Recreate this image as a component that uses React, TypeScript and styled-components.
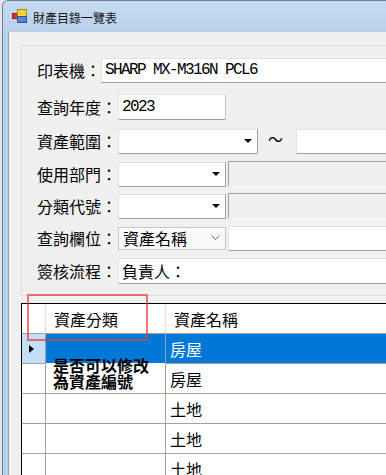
import styled, { createGlobalStyle } from 'styled-components';

const GlobalStyle = createGlobalStyle`
  html, body {
    margin: 0;
    padding: 0;
  }
  body {
    width: 386px;
    height: 475px;
    overflow: hidden;
    background: #e6e6e6;
    font-family: "Noto Sans CJK TC", "Noto Sans", sans-serif;
  }
`

const Window = styled.div`
  display: flex;
  flex-direction: column;
  width: 420px;
  height: 475px;
  margin-left: 2px;
  background: #bfd5ec;
  border-top: 1px solid #6d8096;
  border-left: 1px solid #6d8096;
  border-top-left-radius: 6px;
  box-sizing: border-box;
  overflow: hidden;
`

const TitleBar = styled.div`
  flex-shrink: 0;
  display: flex;
  align-items: center;
  gap: 5px;
  height: 31px;
  padding-left: 9px;
  background: linear-gradient(#c6dbf0, #b9d1ea);
`

const Title = styled.span`
  font-size: 12px;
  line-height: 14px;
  color: #111;
  padding-top: 2px;
`

const Frame = styled.div`
  flex: 1;
  min-height: 0;
  display: flex;
  padding-left: 5px;
  background: #b9d1ea;
`

const Client = styled.div`
  position: relative;
  flex: 1;
  background: #f0f0f0;
  border-left: 1px solid #8ea4bd;
  padding: 13px 0 0 12px;
`

const GroupBox = styled.div`
  width: 420px;
  border: 1px solid #dcdcdc;
  padding: 11px 0 11px 15px;
`

const Row = styled.div<{ $mt: number }>`
  display: flex;
  align-items: center;
  height: 26px;
  margin-top: ${p => p.$mt}px;
`

const Label = styled.span<{ $w: number }>`
  flex-shrink: 0;
  width: ${p => p.$w}px;
  font-size: 16px;
  line-height: 20px;
  color: #000;
  white-space: nowrap;
`

const TextBox = styled.div<{ $w: number; $disabled?: boolean; $h?: number; $ml?: number }>`
  flex-shrink: 0;
  display: flex;
  align-items: center;
  box-sizing: border-box;
  width: ${p => p.$w}px;
  height: ${p => p.$h ?? 25}px;
  margin-left: ${p => p.$ml ?? 0}px;
  padding-left: 3px;
  background: ${p => (p.$disabled ? '#f0f0f0' : '#fff')};
  border: 1px solid;
  border-color: ${p =>
    p.$disabled ? '#a0a0a0 #fff #fff #a0a0a0' : '#e3e3e3 #c4c4c4 #a0a0a0 #e3e3e3'};
`

const MonoText = styled.span`
  font-family: "Liberation Mono", monospace;
  font-size: 16px;
  letter-spacing: -1.6px;
  color: #000;
  line-height: 20px;
`

const BoxText = styled.span`
  font-size: 16px;
  line-height: 20px;
  color: #000;
`

const Combo = styled.div<{ $w: number }>`
  flex-shrink: 0;
  display: flex;
  align-items: center;
  justify-content: flex-end;
  box-sizing: border-box;
  width: ${p => p.$w}px;
  height: 25px;
  padding-right: 5px;
  background: #fff;
  border: 1px solid;
  border-color: #e3e3e3 #a0a0a0 #a0a0a0 #e3e3e3;
`

const Arrow = styled.span`
  width: 0;
  height: 0;
  border-left: 4px solid transparent;
  border-right: 4px solid transparent;
  border-top: 4px solid #000;
`

const FlatCombo = styled.div<{ $w: number }>`
  flex-shrink: 0;
  display: flex;
  align-items: center;
  justify-content: space-between;
  box-sizing: border-box;
  width: ${p => p.$w}px;
  height: 23px;
  padding: 0 5px 0 4px;
  background: #fbfbfb;
  border: 1px solid #c6c6c6;
`

const Tilde = styled.span`
  width: 16px;
  margin: -4px 12px 0 10px;
  font-size: 15px;
  line-height: 20px;
  color: #000;
`

const Grid = styled.div`
  position: relative;
  display: grid;
  grid-template-columns: 24px 120px 260px;
  grid-auto-rows: 30px;
  margin-top: 7px;
  background: #fff;
  border-left: 1px solid #000;
  border-top: 1px solid #000;
`

const Cell = styled.div<{ $kind: 'corner' | 'rowhead' | 'head' | 'data'; $selected?: boolean }>`
  display: flex;
  align-items: center;
  box-sizing: border-box;
  padding-left: ${p => (p.$kind === 'head' ? 8 : p.$kind === 'data' ? 4 : 7)}px;
  font-size: 16px;
  line-height: 20px;
  color: ${p => (p.$selected && p.$kind === 'data' ? '#fff' : '#000')};
  background: ${p =>
    p.$selected ? (p.$kind === 'rowhead' ? '#c4def5' : '#0078d7') : '#fff'};
  border-right: 1px solid ${p => (p.$kind === 'head' || p.$kind === 'corner' ? '#dcdcdc' : '#a0a0a0')};
  border-bottom: 1px solid #a0a0a0;
`

const RowPointer = styled.span`
  width: 0;
  height: 0;
  border-top: 4px solid transparent;
  border-bottom: 4px solid transparent;
  border-left: 5px solid #000;
`

const NoteLabel = styled.div`
  position: absolute;
  left: 24px;
  top: 53px;
  width: 119px;
  height: 36px;
  box-sizing: border-box;
  padding-left: 7px;
  background: linear-gradient(transparent 6px, #fff 6px);
  font-size: 16px;
  font-weight: bold;
  line-height: 16px;
  color: #000;
`

const Highlight = styled.div`
  position: absolute;
  left: 18px;
  top: 262px;
  width: 121px;
  height: 47px;
  box-sizing: border-box;
  border: 2px solid rgba(226, 60, 60, 0.7);
  pointer-events: none;
`

function AppIcon() {
  return (
    <svg width="16" height="16" viewBox="0 0 16 16">
      <rect x="0.5" y="4.5" width="5" height="5" fill="#d33" stroke="#8a1f1f" />
      <rect x="5.5" y="0.5" width="9" height="7" fill="#f5d33a" stroke="#a8861a" />
      <rect x="5.5" y="7.5" width="9" height="6" fill="#4f86d9" stroke="#2a558f" />
    </svg>
  )
}

const rows = ['房屋', '房屋', '土地', '土地', '土地']

export default function App() {
  return (
    <>
      <GlobalStyle />
      <Window>
        <TitleBar>
          <AppIcon />
          <Title>財產目錄一覽表</Title>
        </TitleBar>
        <Frame>
          <Client>
            <GroupBox>
              <Row $mt={0}>
                <Label $w={64}>印表機：</Label>
                <TextBox $w={320}>
                  <MonoText>SHARP MX-M316N PCL6</MonoText>
                </TextBox>
              </Row>
              <Row $mt={11}>
                <Label $w={81}>查詢年度：</Label>
                <TextBox $w={108} $h={26}>
                  <MonoText>2023</MonoText>
                </TextBox>
              </Row>
              <Row $mt={8}>
                <Label $w={81}>資產範圍：</Label>
                <Combo $w={140}>
                  <Arrow />
                </Combo>
                <Tilde>～</Tilde>
                <TextBox $w={120} />
              </Row>
              <Row $mt={7}>
                <Label $w={81}>使用部門：</Label>
                <Combo $w={108}>
                  <Arrow />
                </Combo>
                <TextBox $w={200} $h={26} $ml={2} $disabled />
              </Row>
              <Row $mt={6}>
                <Label $w={81}>分類代號：</Label>
                <Combo $w={108}>
                  <Arrow />
                </Combo>
                <TextBox $w={200} $h={26} $ml={2} $disabled />
              </Row>
              <Row $mt={6}>
                <Label $w={81}>查詢欄位：</Label>
                <FlatCombo $w={108}>
                  <BoxText>資產名稱</BoxText>
                  <svg width="9" height="6" viewBox="0 0 9 6">
                    <path d="M0.5 0.5 L4.5 4.5 L8.5 0.5" fill="none" stroke="#6a6a6a" />
                  </svg>
                </FlatCombo>
                <TextBox $w={200} $ml={2} />
              </Row>
              <Row $mt={7}>
                <Label $w={81}>簽核流程：</Label>
                <TextBox $w={300} $h={26}>
                  <BoxText>負責人：</BoxText>
                </TextBox>
              </Row>
            </GroupBox>
            <Grid>
              <Cell $kind="corner" />
              <Cell $kind="head">資產分類</Cell>
              <Cell $kind="head">資產名稱</Cell>
              {rows.map((name, i) => [
                <Cell key={`h${i}`} $kind="rowhead" $selected={i === 0}>
                  {i === 0 && <RowPointer />}
                </Cell>,
                <Cell key={`a${i}`} $kind="data" $selected={i === 0} />,
                <Cell key={`b${i}`} $kind="data" $selected={i === 0}>
                  {name}
                </Cell>,
              ])}
              <NoteLabel>
                是否可以修改
                <br />
                為資產編號
              </NoteLabel>
            </Grid>
            <Highlight />
          </Client>
        </Frame>
      </Window>
    </>
  )
}
